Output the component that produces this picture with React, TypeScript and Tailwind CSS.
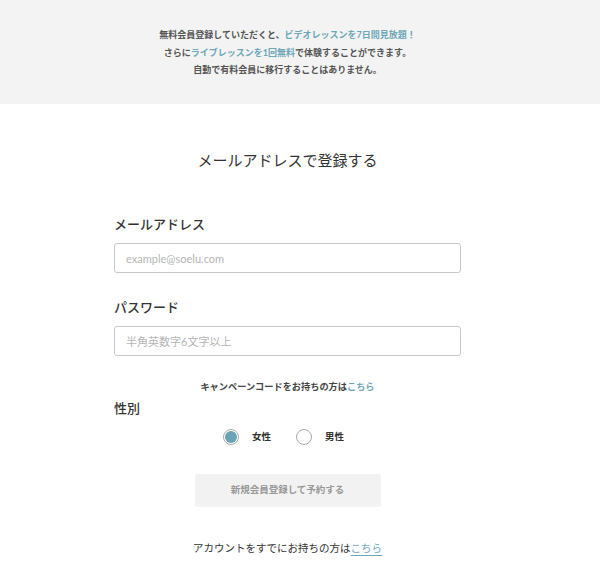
import React, { useState } from 'react';

const font = { fontFamily: 'Lato, "Noto Sans CJK JP", sans-serif' };

export default function App() {
  const [gender, setGender] = useState<'female' | 'male'>('female');

  return (
    <div className="w-[600px] min-h-[564px] bg-white text-[#333]" style={font}>
      {/* Notice band */}
      <div className="h-[104px] bg-[#f3f3f3] pt-[26px]">
        <div className="w-[575px] text-center text-[9px] font-bold leading-[17.5px] text-[#555]">
          <p>
            無料会員登録していただくと、<span className="text-[#6da7b8]">ビデオレッスンを7日間見放題！</span>
          </p>
          <p>
            さらに<span className="text-[#6da7b8]">ライブレッスンを1回無料</span>で体験することができます。
          </p>
          <p>自動で有料会員に移行することはありません。</p>
        </div>
      </div>

      <div className="w-[575px] flex flex-col items-center">
        <h1 className="mt-[44px] text-[15px] leading-[24px] text-[#333]">メールアドレスで登録する</h1>

        <div className="w-[347px] mt-[42px]">
          <label className="block text-[13px] font-medium leading-[20px] text-[#333]">メールアドレス</label>
          <input
            type="email"
            placeholder="example@soelu.com"
            className="mt-[9px] block w-full h-[30px] rounded-[3px] border border-[#c8c8c8] px-[11px] text-[11px] placeholder:text-[#b5b5b5] outline-none"
          />

          <label className="block mt-[24px] text-[13px] font-medium leading-[20px] text-[#333]">パスワード</label>
          <input
            type="password"
            placeholder="半角英数字6文字以上"
            className="mt-[9px] block w-full h-[30px] rounded-[3px] border border-[#c8c8c8] px-[11px] text-[11px] placeholder:text-[#b5b5b5] outline-none"
          />

          <p className="mt-[23px] text-center text-[9.2px] font-bold leading-[16px] text-[#444]">
            キャンペーンコードをお持ちの方は<span className="text-[#6da7b8]">こちら</span>
          </p>

          <label className="block mt-[3px] text-[13px] font-medium leading-[20px] text-[#333]">性別</label>

          <div className="mt-[11px] flex items-center justify-center gap-[13px] pr-[8px]">
            <button
              type="button"
              onClick={() => setGender('female')}
              className="flex items-center gap-[13px]"
            >
              <span className="w-[16px] h-[16px] rounded-full border border-[#aaa] flex items-center justify-center">
                {gender === 'female' && <span className="w-[12px] h-[12px] rounded-full bg-[#6aa3b4]" />}
              </span>
              <span className="text-[9.5px] font-bold text-[#333]">女性</span>
            </button>
            <button
              type="button"
              onClick={() => setGender('male')}
              className="ml-[12px] flex items-center gap-[13px]"
            >
              <span className="w-[16px] h-[16px] rounded-full border border-[#aaa] flex items-center justify-center">
                {gender === 'male' && <span className="w-[12px] h-[12px] rounded-full bg-[#6aa3b4]" />}
              </span>
              <span className="text-[9.5px] font-bold text-[#333]">男性</span>
            </button>
          </div>
        </div>

        <button
          type="button"
          className="mt-[29px] w-[186px] h-[33px] rounded-[2px] bg-[#f2f2f2] text-[9.5px] font-bold text-[#999]"
        >
          新規会員登録して予約する
        </button>

        <p className="mt-[33px] text-[10.5px] leading-[16px] text-[#333]">
          アカウントをすでにお持ちの方は
          <span className="text-[#6da7b8] underline underline-offset-[3px]">こちら</span>
        </p>
      </div>
    </div>
  );
}
